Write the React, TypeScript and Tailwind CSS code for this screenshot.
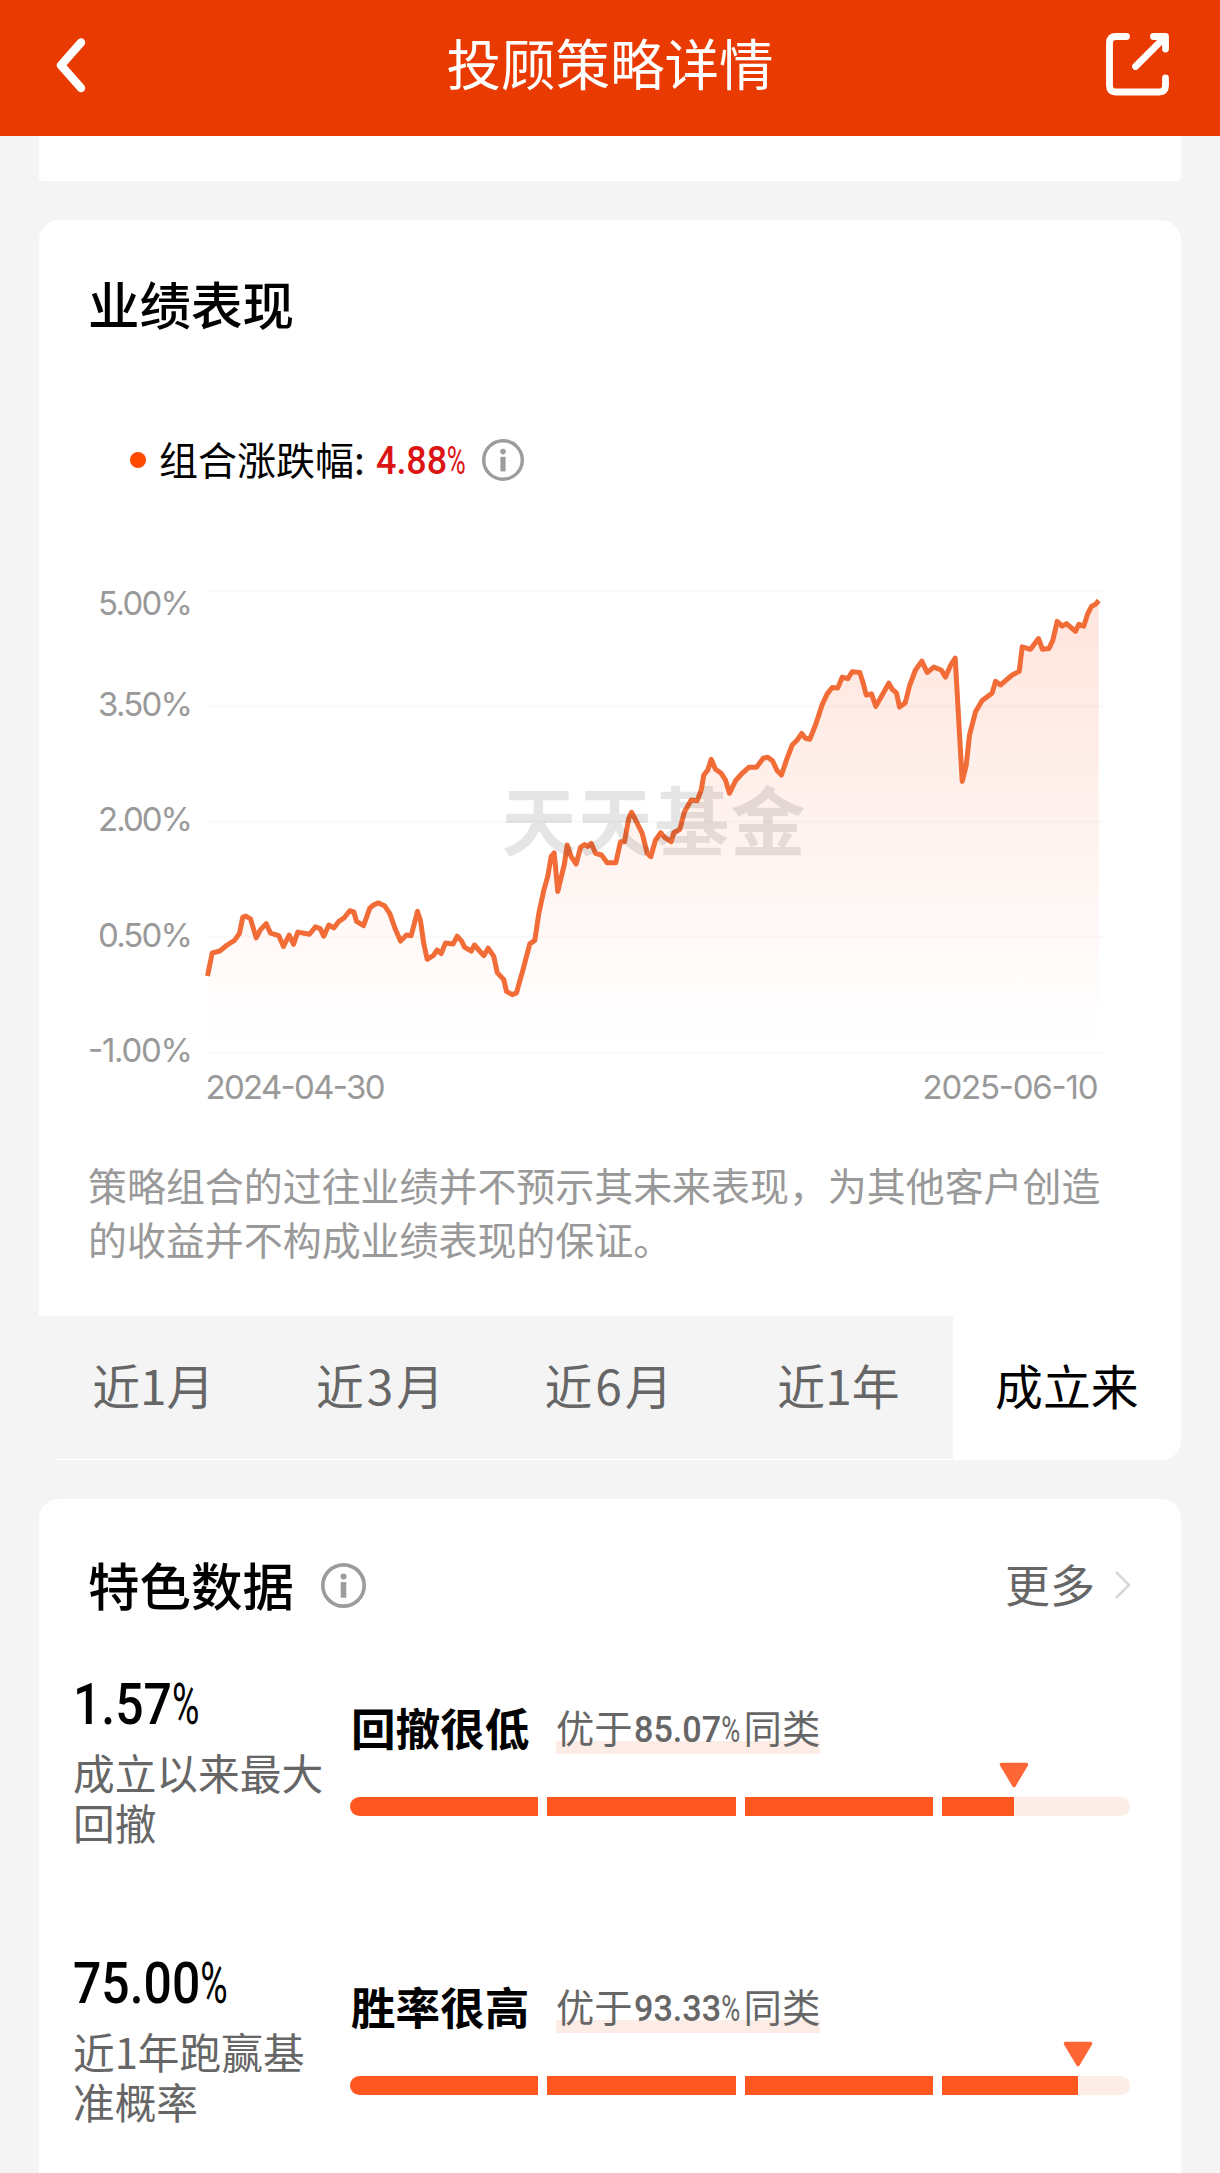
import { ReactNode } from "react";
import clsx from "clsx";

const tabs = ["近1月", "近3月", "近6月", "近1年", "成立来"];

const yTicks = [
  { label: "5.00%", line: 591, text: 615, width: 95 },
  { label: "3.50%", line: 706.5, text: 716, width: 95 },
  { label: "2.00%", line: 821.5, text: 831, width: 95 },
  { label: "0.50%", line: 937, text: 947, width: 95 },
  { label: "-1.00%", line: 1052.5, text: 1062, width: 105 },
];

const line =
  "207,976 211.7,953 219.3,951 226.7,945 234,940.4 239,933.2 242.3,917.1 245.3,916.1 250,918.9 255.7,937.9 260,929.6 265.7,923.6 270,933.2 278.3,935.7 283,946.4 288.7,935 293,944.3 297.3,932.1 309,934.3 315,926.8 319.7,928.6 323.3,936.1 328.3,925 333.3,927.9 338.3,921.4 343.3,918.2 349.3,910.7 353.3,911.8 356,921.4 363,925.7 369.3,908.2 373,905 377.7,902.9 384,905.7 389.3,913.6 395,929.6 400,941.1 406,935 410.7,935.7 417,911.4 420,920.7 423.3,943.9 426.7,959.3 432.7,955.7 436.7,950 440.7,953.6 445,942.9 452.7,943.9 456.7,936.1 461.3,941.4 464,947.1 470.7,951.1 474,945 478.3,950 483.3,955.7 487.7,948.2 493.3,956.4 496.7,972.5 503.3,979.6 506,991.4 511.7,994.6 516,992.9 522.7,968.9 529.3,943.9 534.3,940.4 538.3,913.6 543.3,890.4 547.3,876.1 550.7,856.4 553.7,852.9 557.3,891.4 564,863.6 566.7,845 570.7,856.7 575.7,864 580,847.3 584,844.5 587,846.5 590.7,843.3 595,853.3 601,855 606.7,862.7 615.3,862.7 620,841.7 624,841.7 628.3,818.3 631,812.3 634.3,818.3 641.7,833.3 646.7,853.3 650.3,856.7 655,840 660.3,832.7 664,837.3 670.7,841.7 673.3,832.7 679.3,829.3 684,811.7 690.7,800 696.7,800.7 700.7,790 703.3,775 707.3,770 710.7,759.3 715,769.3 720.7,773.3 725,780 729,793.3 735,780.7 741.7,773.3 748.3,767.3 756,767.3 762.7,758.3 767.3,757.3 772,760.7 776.7,770.7 781,775 786,760 791.7,745 796.7,740 801.3,733.5 805,738.3 809.3,739.3 815,725 821.7,704.6 826.7,693.9 831.7,687.5 837.3,687.9 841.7,677.1 847.3,678.6 851.7,671.8 859.3,672.5 862.7,683.2 865.7,695 871,693.9 875.3,706.4 881.7,695 888.3,683.2 891.7,689.3 896,692.9 899,707.1 904.7,702.9 909.3,685 915,670 921.3,661.1 926.7,672.5 933.3,667.1 940.7,670 945,677.1 950,665.4 954.7,658.2 961.7,781.4 965.7,765.4 969,735 975,711.8 981.7,700.4 991.7,692.9 995,681.4 1000,685 1005,680.7 1011.7,675 1018.7,671.4 1021.7,646.8 1030,649.3 1038,638.6 1042,649.3 1048.3,648.6 1052.3,640.4 1056.7,621.4 1061.7,626.1 1066,623.6 1075,631.4 1078.3,624.3 1083.3,626.1 1087.3,613.6 1091,606.4 1095,604.3 1098.3,600.5";

const stats = [
  {
    value: "1.57",
    label: ["成立以来最大", "回撤"],
    title: "回撤很低",
    better: "85.07",
  },
  {
    value: "75.00",
    label: ["近1年跑赢基", "准概率"],
    title: "胜率很高",
    better: "93.33",
  },
];

const BAR_WIDTH = 780;
const BAR_GAP = 9;
const SEGMENT = (BAR_WIDTH - BAR_GAP * 3) / 4;

function InfoIcon({ className }: { className: string }) {
  return (
    <svg viewBox="0 0 42 42" className={className} fill="none">
      <circle cx="21" cy="21" r="19.3" stroke="#9c9c9c" strokeWidth="3.4" />
      <circle cx="21" cy="12.6" r="2.8" fill="#9c9c9c" />
      <rect x="18.4" y="17.8" width="5.2" height="14.6" fill="#9c9c9c" />
    </svg>
  );
}

// narrow figures with a slimmer percent sign
function Percent({
  value,
  className,
  signClass,
}: {
  value: string;
  className: string;
  signClass: string;
}) {
  return (
    <span className={clsx("inline-flex font-[Roboto] leading-none", className)}>
      <span>{value}</span>
      <span className={clsx("origin-left font-normal", signClass)}>%</span>
    </span>
  );
}

function Card({ className, children }: { className?: string; children?: ReactNode }) {
  return <section className={clsx("mx-[39px] bg-white", className)}>{children}</section>;
}

function Chart() {
  return (
    <svg viewBox="39 570 1141 560" className="block h-[560px] w-full font-[Inter]">
      <defs>
        <linearGradient id="area" x1="0" y1="600" x2="0" y2="1052" gradientUnits="userSpaceOnUse">
          <stop offset="0" stopColor="#ff5a28" stopOpacity="0.16" />
          <stop offset="0.9" stopColor="#ff5a28" stopOpacity="0.01" />
          <stop offset="1" stopColor="#ff5a28" stopOpacity="0" />
        </linearGradient>
      </defs>
      {yTicks.map((t) => (
        <g key={t.label}>
          <line x1="207" x2="1103" y1={t.line} y2={t.line} stroke="#f8f7f7" strokeWidth="1.5" />
          <text x={192.5 - t.width} y={t.text} textLength={t.width} fontSize="33" fill="#999">
            {t.label}
          </text>
        </g>
      ))}
      <polygon points={`207,1052 ${line} 1098.3,1052`} fill="url(#area)" />
      <polyline
        points={line}
        fill="none"
        stroke="#f26c38"
        strokeWidth="5"
        strokeLinejoin="round"
      />
      <text
        x="501"
        y="850"
        textLength="304"
        fontSize="75"
        fontWeight="700"
        fill="#000"
        fillOpacity="0.1"
        className="font-['Noto_Sans_CJK_SC']"
      >
        天天基金
      </text>
      <text x="205" y="1099" textLength="180" fontSize="33" fill="#999">
        2024-04-30
      </text>
      <text x="922" y="1099" textLength="176" fontSize="33" fill="#999">
        2025-06-10
      </text>
    </svg>
  );
}

function RankBar({ percent }: { percent: number }) {
  const filled = (percent / 100) * BAR_WIDTH;
  return (
    <div className="relative mt-[43px] flex h-[19px] w-[780px] gap-[9px]">
      {[0, 1, 2, 3].map((i) => {
        const width = Math.max(0, Math.min(SEGMENT, filled - i * (SEGMENT + BAR_GAP)));
        return (
          <div
            key={i}
            className="flex-1 overflow-hidden bg-[#fdede7] first:rounded-l-full last-of-type:rounded-r-full"
          >
            <div className="h-full rounded-none bg-[#ff571f]" style={{ width }} />
          </div>
        );
      })}
      <svg
        viewBox="0 0 30 26"
        className="absolute -top-[35px] h-[26px] w-[30px] -translate-x-1/2"
        style={{ left: filled }}
      >
        <path d="M2.5 2.5H27.5L15 23.5Z" fill="#ff6636" stroke="#ff6636" strokeWidth="3.5" strokeLinejoin="round" />
      </svg>
    </div>
  );
}

export default function App() {
  return (
    <div className="h-[2173px] w-[1220px] overflow-hidden bg-[#f4f4f4] font-['Noto_Sans_CJK_SC',sans-serif] text-black">
      <header className="flex h-[136px] items-center justify-between bg-[#e93a02] pr-[46px] pb-[9px] pl-[50px] text-white">
        <svg viewBox="0 0 68 64" className="h-[64px] w-[68px]" fill="none">
          <path d="M31 10.5L11 33.3L31 56" stroke="#fff" strokeWidth="8.4" strokeLinecap="round" strokeLinejoin="round" />
        </svg>
        <h1 className="pb-[3px] text-[54.5px] leading-none">投顾策略详情</h1>
        <svg viewBox="0 0 72 72" className="h-[72px] w-[72px]" fill="none">
          <g stroke="#fff" strokeWidth="6.8" strokeLinecap="round" strokeLinejoin="round">
            <path d="M24.5 8.5H14Q7.5 8.5 7.5 15V57.500Q7.5 64 14 64H57Q63.500 64 63.500 57.500V50" />
            <path d="M33.500 38.500L62 10M51.500 8.500H63.500V21" />
          </g>
        </svg>
      </header>

      <Card className="h-[45px] rounded-b-[4px]" />

      <Card className="mt-[39px] overflow-hidden rounded-[20px]">
        <h2 className="pt-[57px] pl-[49px] text-[51.5px] leading-[52px] font-medium">业绩表现</h2>
        <div className="mt-[110px] flex h-[42px] items-center pl-[91px]">
          <span className="size-4 rounded-full bg-[#ff4a00]" />
          <span className="ml-[13px] pb-[3px] text-[39px] leading-none">组合涨跌幅</span>
          <span className="w-[22px] pb-[3px] text-[39px] leading-none">:</span>
          <span className="w-[106px] pt-[2px]">
            <Percent
              value="4.88"
              className="origin-left scale-x-[.92] text-[39px] font-medium text-[#dc1414]"
              signClass="scale-x-[.72]"
            />
          </span>
          <InfoIcon className="size-[42px]" />
        </div>
        <div className="mt-[89px]">
          <Chart />
        </div>
        <p className="mt-[28px] h-[158px] pl-[49px] text-[38.95px] leading-[53.7px] whitespace-nowrap text-[#999]">
          策略组合的过往业绩并不预示其未来表现，为其他客户创造
          <br />
          的收益并不构成业绩表现的保证。
        </p>
        <nav className="grid h-[144px] grid-cols-5 text-[47.8px] leading-none">
          {tabs.map((tab, i) => (
            <button
              key={tab}
              className={clsx(
                "flex items-center justify-center border-b border-white pb-[5px]",
                i === 4 ? "bg-white text-black" : "bg-[#f4f4f4] text-[#666]",
                (i === 1 || i === 2) && "tracking-[3px]"
              )}
            >
              {tab}
            </button>
          ))}
        </nav>
      </Card>

      <Card className="mt-[39px] h-[760px] rounded-t-[20px]">
        <div className="flex items-center pt-[60px] pr-[49px] pl-[49px]">
          <h2 className="-mt-[3px] text-[51.5px] leading-[55px] font-medium">特色数据</h2>
          <InfoIcon className="ml-[27px] size-[45px]" />
          <span className="ml-auto pb-[3px] text-[45px] leading-none text-[#666]">更多</span>
          <svg viewBox="0 0 18 30" className="ml-[19px] h-[30px] w-[18px]" fill="none">
            <path d="M2 2L15 15L2 28" stroke="#d8d8d8" strokeWidth="2.6" />
          </svg>
        </div>
        {stats.map((s, i) => (
          <div key={s.title} className={clsx("flex h-[279px] pl-[34px]", i === 0 && "mt-[64px]")}>
            <div className="w-[277px]">
              <Percent
                value={s.value}
                className="origin-left scale-x-[.86] text-[58px] font-medium"
                signClass="scale-x-[.75]"
              />
              <p className="mt-[14px] text-[41.7px] leading-[50px] whitespace-nowrap text-[#666]">
                {s.label[0]}
                <br />
                {s.label[1]}
              </p>
            </div>
            <div className="pt-[30px]">
              <div className="flex h-[49px] items-center">
                <h3 className="w-[206px] pb-[5px] pl-px text-[44.6px] leading-none font-bold">{s.title}</h3>
                <span className="flex h-full items-center bg-[linear-gradient(transparent_36px,#fdece6_36px)] pb-[5px] text-[38.3px] leading-none text-[#666]">
                  优于
                  <span className="w-[111px] pt-[2px] pl-px">
                    <Percent
                      value={s.better}
                      className="origin-left scale-x-[.91] text-[37.5px] font-medium"
                      signClass="scale-x-[.76]"
                    />
                  </span>
                  同类
                </span>
              </div>
              <RankBar percent={Number(s.better)} />
            </div>
          </div>
        ))}
      </Card>
    </div>
  );
}
